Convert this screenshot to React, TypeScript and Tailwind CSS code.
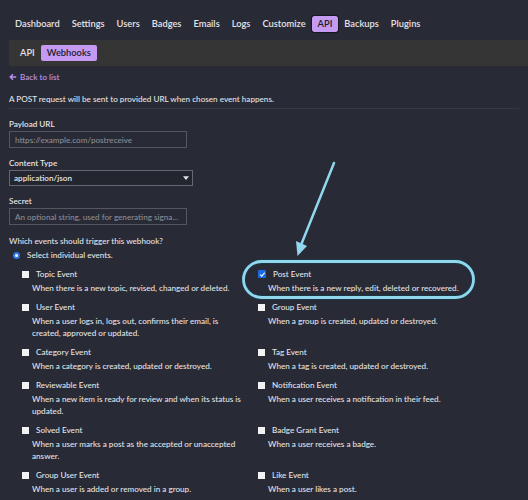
const NAV = ["Dashboard", "Settings", "Users", "Badges", "Emails", "Logs", "Customize", "API", "Backups", "Plugins"];

type Ev = { title: string; desc: string; checked?: boolean };

const EVENTS: Ev[] = [
  { title: "Topic Event", desc: "When there is a new topic, revised, changed or deleted." },
  { title: "Post Event", desc: "When there is a new reply, edit, deleted or recovered.", checked: true },
  { title: "User Event", desc: "When a user logs in, logs out, confirms their email, is created, approved or updated." },
  { title: "Group Event", desc: "When a group is created, updated or destroyed." },
  { title: "Category Event", desc: "When a category is created, updated or destroyed." },
  { title: "Tag Event", desc: "When a tag is created, updated or destroyed." },
  { title: "Reviewable Event", desc: "When a new item is ready for review and when its status is updated." },
  { title: "Notification Event", desc: "When a user receives a notification in their feed." },
  { title: "Solved Event", desc: "When a user marks a post as the accepted or unaccepted answer." },
  { title: "Badge Grant Event", desc: "When a user receives a badge." },
  { title: "Group User Event", desc: "When a user is added or removed in a group." },
  { title: "Like Event", desc: "When a user likes a post." },
];

function Checkbox({ checked }: { checked?: boolean }) {
  if (checked) {
    return (
      <span className="flex h-[8px] w-[8px] items-center justify-center rounded-[1px] bg-[#1a6ae8]">
        <svg viewBox="0 0 8 8" className="h-[7px] w-[7px]">
          <path d="M1.5 4.2 L3.2 5.8 L6.5 2" fill="none" stroke="#fff" strokeWidth="1.3" />
        </svg>
      </span>
    );
  }
  return <span className="block h-[7px] w-[7px] bg-[#f2f2f2]" />;
}

function EventItem({ ev }: { ev: Ev }) {
  return (
    <div className="pr-[9px]">
      <div className="flex items-center gap-[7px]">
        <Checkbox checked={ev.checked} />
        <span>{ev.title}</span>
      </div>
      <p className="mt-[2px] pl-[10px]">{ev.desc}</p>
    </div>
  );
}

export default function App() {
  return (
    <div
      className="relative min-h-[500px] w-[528px] overflow-hidden bg-[#282a36] text-[8.15px] font-medium leading-[12px] text-[#e4e4e6]"
      style={{ fontFamily: "Lato, 'Open Sans', sans-serif" }}
    >
      <nav className="flex items-center pl-[9px] pt-[16px] text-[9.3px]">
        {NAV.map((n) => (
          <span
            key={n}
            className={`flex h-[16px] items-center px-[6px] font-semibold ${
              n === "API" ? "rounded-[2px] bg-[#c49af2] text-[#1e1b2a] outline outline-1 outline-[#16161c]" : ""
            }`}
          >
            {n}
          </span>
        ))}
      </nav>

      <div className="ml-[9px] mt-[8px] flex h-[26px] items-center bg-[#353536] pl-[5px] text-[9.3px]">
        <span className="px-[6px] font-semibold">API</span>
        <span className="flex h-[16px] items-center rounded-[2px] bg-[#c49af2] px-[6px] font-semibold text-[#1e1b2a]">
          Webhooks
        </span>
      </div>

      <div className="px-[9px]">
        <div className="mt-[5px] flex items-center gap-[3px] text-[#b592ec]">
          <svg viewBox="0 0 10 10" className="h-[8px] w-[8px]">
            <path d="M5 1.5 L1.5 5 L5 8.5 M1.5 5 H9" fill="none" stroke="currentColor" strokeWidth="1.8" />
          </svg>
          <span className="font-semibold">Back to list</span>
        </div>

        <p className="mt-[10px]">A POST request will be sent to provided URL when chosen event happens.</p>
        <div className="mt-[3px] h-px bg-[#363846]" />

        <label className="mt-[9px] block font-semibold">Payload URL</label>
        <div className="mt-[1px] flex h-[17px] w-[178px] items-center border border-[#55565f] px-[5px] text-[#8b8c93]">
          https://example.com/postreceive
        </div>

        <label className="mt-[9px] block font-semibold">Content Type</label>
        <div className="mt-[1px] flex h-[16px] w-[184px] items-center justify-between border border-[#66676f] bg-[#24262f] pl-[4px] pr-[3px] font-semibold">
          <span>application/json</span>
          <svg viewBox="0 0 8 5" className="h-[4px] w-[6px]">
            <path d="M0 0 H8 L4 5 Z" fill="#e2e2e4" />
          </svg>
        </div>

        <label className="mt-[9px] block font-semibold">Secret</label>
        <div className="mt-[1px] flex h-[17px] w-[178px] items-center overflow-hidden whitespace-nowrap border border-[#55565f] px-[5px] text-[#8b8c93]">
          An optional string, used for generating signa...
        </div>

        <p className="mt-[10px]">Which events should trigger this webhook?</p>
        <div className="mt-[2px] flex items-center gap-[7px] pl-[4px]">
          <span className="flex h-[7px] w-[7px] items-center justify-center rounded-full bg-[#2b76e8]">
            <span className="h-[3px] w-[3px] rounded-full bg-white" />
          </span>
          <span>Select individual events.</span>
        </div>

        <div className="mt-[7px] grid w-[485px] grid-cols-2 gap-y-[7px] pl-[13px]">
          {EVENTS.map((ev) => (
            <EventItem key={ev.title} ev={ev} />
          ))}
        </div>
      </div>

      {/* callout around the selected event */}
      <svg className="pointer-events-none absolute left-0 top-0" width="528" height="500">
        <rect x="243.5" y="261.5" width="230" height="36" rx="18" fill="none" stroke="#1b3a48" strokeWidth="4.5" />
        <rect x="243.5" y="261.5" width="230" height="36" rx="18" fill="none" stroke="#90d7ee" strokeWidth="2.8" />
        <line x1="334" y1="163" x2="301" y2="245" stroke="#90d7ee" strokeWidth="2.5" strokeLinecap="round" />
        <path d="M296 241 L297.5 256 L307 246 Z" fill="#90d7ee" />
      </svg>
    </div>
  );
}
